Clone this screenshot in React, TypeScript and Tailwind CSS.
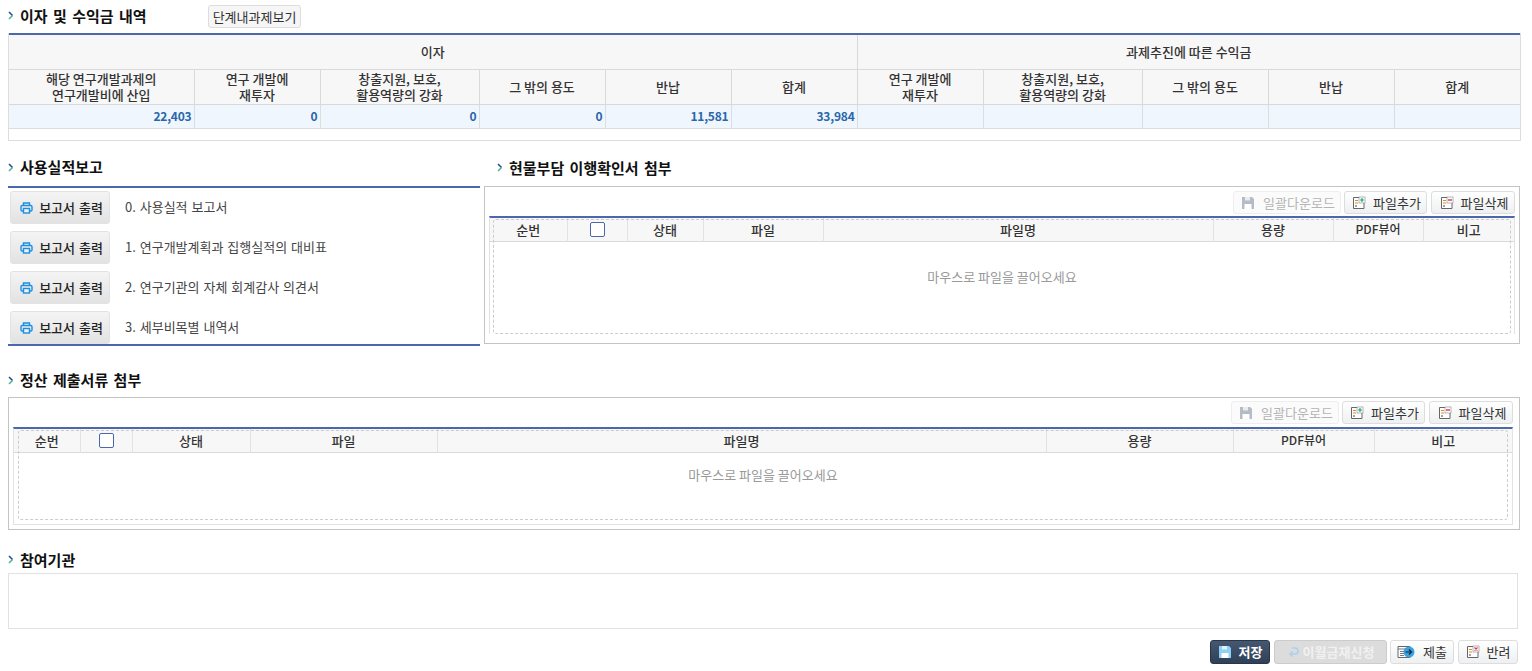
import type { ReactNode } from 'react'

const topCols = [185, 126, 159, 126, 126, 126, 126, 159, 126, 126, 126]
const fileColsA = [77, 60, 76, 120, 390, 120, 90, 91]
const fileColsB = [66, 52, 118, 187, 609, 187, 141, 138]

function Arrow() {
    return (
        <svg width="6" height="9" viewBox="0 0 6 9" className="shrink-0">
            <path d="M1 1l3.5 3.5" fill="none" stroke="#24508a" strokeWidth="1.6" />
            <path d="M4.5 4.5L1 8" fill="none" stroke="#4fb59a" strokeWidth="1.6" />
        </svg>
    )
}

function SectionTitle({ children, className }: { children: ReactNode; className?: string }) {
    return (
        <div className={`flex items-center gap-[6px] text-[15px] font-bold leading-5 text-[#111] [word-spacing:2px] ${className ?? ''}`}>
            <Arrow />
            <span>{children}</span>
        </div>
    )
}

function PrinterIcon() {
    return (
        <svg width="13" height="12" viewBox="0 0 13 12" fill="none" stroke="#1c8fe0" strokeWidth="1.4">
            <path d="M3.5 3.5V1h6v2.5" />
            <rect x="1" y="3.5" width="11" height="5.5" rx="1.2" />
            <rect x="3.5" y="6.5" width="6" height="4.5" fill="#f0f0f0" />
        </svg>
    )
}

function FileIcon({ mark }: { mark: 'add' | 'del' | 'x' }) {
    const color = mark === 'add' ? '#18a878' : '#e0324a'
    return (
        <svg width="14" height="14" viewBox="0 0 14 14" fill="none">
            <path d="M1.5 1.5h10.5v11H1.5z" fill="#fff" stroke="#666" />
            <path d="M3 4.5h3M3 7h3" stroke="#d98a2b" />
            <path d="M3 10h2" stroke="#444" />
            <rect x="7" y="1" width="6" height="6" fill="#fff" stroke="#888" strokeWidth="0.6" />
            {mark === 'add' && <path d="M10 2v4M8 4h4" stroke={color} strokeWidth="1.2" />}
            {mark === 'del' && <path d="M8 4h4" stroke={color} strokeWidth="1.4" />}
            {mark === 'x' && <path d="M8.5 2.5l3 3M11.5 2.5l-3 3" stroke={color} strokeWidth="1.2" />}
        </svg>
    )
}

function DiskIcon({ color }: { color: string }) {
    return (
        <svg width="15" height="14" viewBox="0 0 15 14">
            <path d="M1 1h10l2 2v10H1z" fill={color} />
            <rect x="3.5" y="8" width="7" height="5" fill="#fff" />
            <rect x="4" y="1" width="5" height="3.5" fill="#fff" opacity="0.7" />
        </svg>
    )
}

function SubmitIcon() {
    return (
        <svg width="19" height="14" viewBox="0 0 19 14" fill="none">
            <path d="M1 1.5h12v11H1z" fill="#fff" stroke="#666" />
            <path d="M1 4h12M3 6.5h4M3 8.5h4M3 10.5h4" stroke="#777" />
            <circle cx="12" cy="7" r="5.5" fill="#3aa0e0" />
            <path d="M8.5 7h6M12 4.5L14.5 7 12 9.5" stroke="#123" strokeWidth="1.1" />
        </svg>
    )
}

function ReturnIcon() {
    return (
        <svg width="12" height="12" viewBox="0 0 12 12" fill="none" stroke="#a9d1ee" strokeWidth="1.6">
            <path d="M5 2h3a2.5 2.5 0 010 6H3" />
            <path d="M5.5 5.5L3 8l2.5 2.5" />
        </svg>
    )
}

function ToolButton({ icon, label, disabled, className }: { icon: ReactNode; label: string; disabled?: boolean; className?: string }) {
    return (
        <div
            className={`flex h-[23px] items-center justify-center gap-[7px] rounded-[3px] border text-[13px] ${
                disabled
                    ? 'border-[#eee] bg-[#fbfbfb] text-[#b5b5b5]'
                    : 'border-[#ddd] bg-gradient-to-b from-white to-[#eef0f1] text-[#333]'
            } ${className ?? ''}`}
        >
            {icon}
            <span>{label}</span>
        </div>
    )
}

function FileToolbar() {
    return (
        <div className="flex h-[23px] justify-end">
            <ToolButton disabled className="w-[108px] pl-[2px]" icon={<DiskIcon color="#b4bcc6" />} label="일괄다운로드" />
            <ToolButton className="ml-[3px] w-[83px] pl-[2px]" icon={<FileIcon mark="add" />} label="파일추가" />
            <ToolButton className="ml-[4px] w-[84px] pl-[2px]" icon={<FileIcon mark="del" />} label="파일삭제" />
        </div>
    )
}

function FileTable({ cols, height, dropHeight, dropInset, textTop }: { cols: number[]; height: number; dropHeight: number; dropInset: number; textTop: number }) {
    const heads = ['순번', '', '상태', '파일', '파일명', '용량', 'PDF뷰어', '비고']
    return (
        <div className="relative border-x border-t-2 border-x-[#e2e2e2] border-t-[#4a68aa]" style={{ height }}>
            <table className="w-full table-fixed border-collapse">
                <colgroup>
                    {cols.map((w, i) => (
                        <col key={i} style={{ width: w }} />
                    ))}
                </colgroup>
                <thead>
                    <tr className="h-[23px] border-b border-[#d9d9d9] bg-[#f7f7f7]">
                        {heads.map((h, i) => (
                            <th
                                key={i}
                                className={`border-r border-[#e2e2e2] p-0 text-center font-medium text-[#333] last:border-r-0 ${
                                    h === 'PDF뷰어' ? 'text-[12px]' : 'text-[13px]'
                                }`}
                            >
                                {h || <div className="mx-auto h-[15px] w-[15px] rounded-[2px] border border-[#4a68aa] bg-white" />}
                            </th>
                        ))}
                    </tr>
                </thead>
            </table>
            {/* drop zone sits over the grid */}
            <div
                className="absolute top-[1px] rounded-[3px] border border-dashed border-[#ccc]"
                style={{ left: dropInset, right: dropInset, height: dropHeight }}
            >
                <div className="text-center text-[13px] leading-5 text-[#999]" style={{ paddingTop: textTop }}>
                    마우스로 파일을 끌어오세요
                </div>
            </div>
        </div>
    )
}

function ReportRow({ label }: { label: string }) {
    return (
        <div className="flex h-[40px] shrink-0 items-start pt-[3px]">
            <div className="ml-[2px] flex h-[33px] w-[100px] items-center justify-center gap-[6px] rounded-[3px] border border-[#e2e2e2] bg-gradient-to-b from-[#f4f4f4] to-[#e2e2e2] pl-[3px] text-[13px] font-medium text-[#222] [word-spacing:1px]">
                <PrinterIcon />
                <span>보고서 출력</span>
            </div>
            <span className="ml-[15px] mt-[6px] text-[13px] leading-5 text-[#444] [word-spacing:1px]">{label}</span>
        </div>
    )
}

export default function App() {
    const subHeads = [
        <>해당 연구개발과제의<br />연구개발비에 산입</>,
        <>연구 개발에<br />재투자</>,
        <>창출지원, 보호,<br />활용역량의 강화</>,
        '그 밖의 용도',
        '반납',
        '합계',
        <>연구 개발에<br />재투자</>,
        <>창출지원, 보호,<br />활용역량의 강화</>,
        '그 밖의 용도',
        '반납',
        '합계',
    ]
    const values = ['22,403', '0', '0', '0', '11,581', '33,984', '', '', '', '', '']

    return (
        <div className="h-[671px] w-[1532px] overflow-hidden bg-white font-['Noto_Sans_CJK_KR','Noto_Sans',sans-serif] text-[13px]">
            <div className="flex h-[33px] items-center pl-[8px]">
                <SectionTitle className="-mt-[2px] w-[200px]">이자 및 수익금 내역</SectionTitle>
                <div className="flex h-[23px] w-[93px] items-center justify-center rounded-[3px] border border-[#ddd] bg-[#f6f6f6] text-[13px] text-[#333]">
                    단계내과제보기
                </div>
            </div>

            <div className="ml-[8px] h-[108px] w-[1513px] border-x border-b border-[#ddd]">
                <table className="w-[1511px] table-fixed border-collapse border-t-2 border-[#4a68aa]">
                    <colgroup>
                        {topCols.map((w, i) => (
                            <col key={i} style={{ width: w }} />
                        ))}
                    </colgroup>
                    <thead>
                        <tr className="h-[35px] bg-[#f7f7f7] text-[#333]">
                            <th colSpan={6} className="border-b border-r border-[#d9d9d9] p-0 text-[13px] font-medium">이자</th>
                            <th colSpan={5} className="border-b border-[#d9d9d9] p-0 text-[13px] font-medium">과제추진에 따른 수익금</th>
                        </tr>
                        <tr className="h-[35px] bg-[#f7f7f7] text-[#333]">
                            {subHeads.map((h, i) => (
                                <th key={i} className="border-b border-r border-[#d9d9d9] p-0 text-[13px] leading-[16px] font-medium last:border-r-0">
                                    {h}
                                </th>
                            ))}
                        </tr>
                    </thead>
                    <tbody>
                        <tr className="h-[24px] bg-[#eff6fd]">
                            {values.map((v, i) => (
                                <td key={i} className="border-b border-r border-[#ddd] p-0 pr-[2px] text-right text-[12px] font-bold tracking-[-0.2px] text-[#2a66aa] last:border-r-0">
                                    {v}
                                </td>
                            ))}
                        </tr>
                    </tbody>
                </table>
            </div>

            <div className="mt-[13px] flex h-[205px] pl-[8px]">
                <div className="w-[472px]">
                    <div className="flex h-[32px] items-center pb-[6px]">
                        <SectionTitle>사용실적보고</SectionTitle>
                    </div>
                    <div className="flex h-[160px] flex-col overflow-hidden border-y-2 border-[#4a68aa]">
                        <ReportRow label="0. 사용실적 보고서" />
                        <ReportRow label="1. 연구개발계획과 집행실적의 대비표" />
                        <ReportRow label="2. 연구기관의 자체 회계감사 의견서" />
                        <ReportRow label="3. 세부비목별 내역서" />
                    </div>
                </div>
                <div className="ml-[4px] w-[1036px]">
                    <div className="flex h-[32px] items-center pb-[5px] pl-[13px]">
                        <SectionTitle>현물부담 이행확인서 첨부</SectionTitle>
                    </div>
                    <div className="h-[158px] border border-[#c4c4c4] px-[4px] pt-[4px]">
                        <FileToolbar />
                        <div className="mt-[2px]">
                            <FileTable cols={fileColsA} height={118} dropHeight={115} dropInset={3} textTop={47} />
                        </div>
                    </div>
                </div>
            </div>

            <div className="ml-[8px] w-[1512px]">
                <div className="flex h-[38px] items-center pt-[4px]">
                    <SectionTitle>정산 제출서류 첨부</SectionTitle>
                </div>
                <div className="h-[133px] border border-[#c4c4c4] pl-[4px] pr-[6px] pt-[3px]">
                    <FileToolbar />
                    <div className="mt-[3px] h-[98px] border-b border-[#e2e2e2]">
                        <FileTable cols={fileColsB} height={97} dropHeight={90} dropInset={4} textTop={34} />
                    </div>
                </div>
            </div>

            <div className="ml-[8px] mt-[18px] w-[1510px]">
                <div className="flex h-[25px] items-center pb-[2px]">
                    <SectionTitle>참여기관</SectionTitle>
                </div>
                <div className="h-[56px] border border-[#e2e2e2]" />
            </div>

            <div className="mt-[11px] flex w-[1518px] justify-end">
                <div className="flex h-[24px] w-[60px] items-center justify-center gap-[6px] rounded-[3px] border border-[#27364a] bg-gradient-to-b from-[#46586f] to-[#2f4058] text-[13px] font-bold text-white">
                    <DiskIcon color="#8fd0f7" />
                    <span>저장</span>
                </div>
                <div className="ml-[4px] flex h-[24px] w-[113px] items-center justify-center gap-[4px] rounded-[3px] border border-[#ccc] bg-[#dcdcdc] text-[13px] font-bold text-[#f1f1f1]">
                    <ReturnIcon />
                    <span>이월금재신청</span>
                </div>
                <ToolButton className="ml-[3px] h-[24px] w-[64px]" icon={<SubmitIcon />} label="제출" />
                <ToolButton className="ml-[4px] h-[24px] w-[60px]" icon={<FileIcon mark="x" />} label="반려" />
            </div>
        </div>
    )
}
